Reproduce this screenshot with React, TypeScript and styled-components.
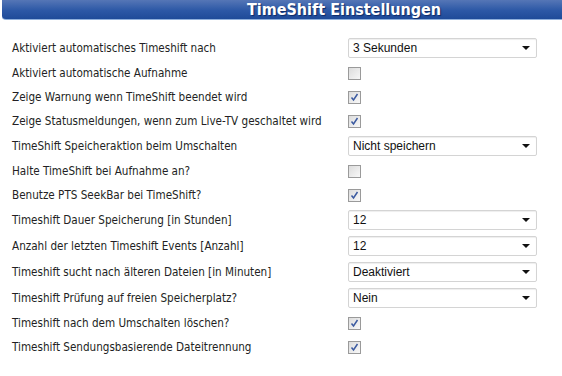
import { createGlobalStyle, styled } from "styled-components"

const Global = createGlobalStyle`
    body {
        margin: 0;
        background: #fff;
        font-family: "DejaVu Sans Condensed", "DejaVu Sans", sans-serif;
    }
`

type Setting = {
    label: string,
    kind: "select" | "check",
    value?: string,
    checked?: boolean,
}

const settings: Setting[] = [
    { label: "Aktiviert automatisches Timeshift nach", kind: "select", value: "3 Sekunden" },
    { label: "Aktiviert automatische Aufnahme", kind: "check", checked: false },
    { label: "Zeige Warnung wenn TimeShift beendet wird", kind: "check", checked: true },
    { label: "Zeige Statusmeldungen, wenn zum Live-TV geschaltet wird", kind: "check", checked: true },
    { label: "TimeShift Speicheraktion beim Umschalten", kind: "select", value: "Nicht speichern" },
    { label: "Halte TimeShift bei Aufnahme an?", kind: "check", checked: false },
    { label: "Benutze PTS SeekBar bei TimeShift?", kind: "check", checked: true },
    { label: "Timeshift Dauer Speicherung [in Stunden]", kind: "select", value: "12" },
    { label: "Anzahl der letzten Timeshift Events [Anzahl]", kind: "select", value: "12" },
    { label: "Timeshift sucht nach älteren Dateien [in Minuten]", kind: "select", value: "Deaktiviert" },
    { label: "Timeshift Prüfung auf freien Speicherplatz?", kind: "select", value: "Nein" },
    { label: "Timeshift nach dem Umschalten löschen?", kind: "check", checked: true },
    { label: "Timeshift Sendungsbasierende Dateitrennung", kind: "check", checked: true },
]

export default function App() {
    return (<Page>
        <Global />
        <Header>
            <Title>TimeShift Einstellungen</Title>
        </Header>
        <Form>
            {settings.map((s, i) => (
                <Row key={i} $select={s.kind === "select"}>
                    <Label>{s.label}</Label>
                    {s.kind === "select" ? (
                        <Select>
                            <span>{s.value}</span>
                            <Arrow />
                        </Select>
                    ) : (
                        <Check>
                            {s.checked && (
                                <svg width="11" height="11" viewBox="0 0 11 11">
                                    <path d="M2.5 5.5 L4.5 8 L8.5 2" fill="none" stroke="#3b5aa0" strokeWidth="1.5" />
                                </svg>
                            )}
                        </Check>
                    )}
                </Row>
            ))}
        </Form>
    </Page>)
}

const Page = styled.div`
    width: 562px;
    height: 376px;
    overflow: hidden;
`

const Header = styled.div`
    margin-left: 2px;
    height: 19px;
    border-bottom: 1px solid #8fb0dc;
    border-bottom-left-radius: 4px;
    background: linear-gradient(#5576b6, #2c58a6 55%, #1e4b99);
    display: flex;
    justify-content: center;
    padding-left: 124px;
`

const Title = styled.div`
    color: #fff;
    font-family: "DejaVu Sans Condensed", "DejaVu Sans", sans-serif;
    font-weight: bold;
    font-size: 16px;
    line-height: 19px;
    text-shadow: 1px 1px 1px #0d2a66;
`

const Form = styled.div`
    padding: 15px 0 0 12px;
    display: flex;
    flex-direction: column;
`

const Row = styled.div<{ $select: boolean }>`
    display: grid;
    grid-template-columns: 336px 189px;
    align-items: center;
    height: ${p => p.$select ? "26px" : "24px"};
`

const Label = styled.div`
    font-size: 11.6px;
    color: #231f24;
`

const Select = styled.div`
    height: 20px;
    box-sizing: border-box;
    border: 1px solid #d4d4d4;
    border-radius: 2px;
    box-shadow: inset 0 1px 1px #eee;
    display: flex;
    align-items: center;
    justify-content: space-between;
    padding: 0 6px 0 4px;
    font-family: "Liberation Sans", sans-serif;
    font-size: 12px;
    color: #111;
`

const Arrow = styled.span`
    width: 0;
    height: 0;
    border-left: 4px solid transparent;
    border-right: 4px solid transparent;
    border-top: 4px solid #111;
`

const Check = styled.div`
    width: 13px;
    height: 13px;
    box-sizing: border-box;
    border: 1px solid #9a9a9a;
    background: linear-gradient(135deg, #dcdcdc, #f8f8f8);
    display: flex;
    align-items: center;
    justify-content: center;
`
